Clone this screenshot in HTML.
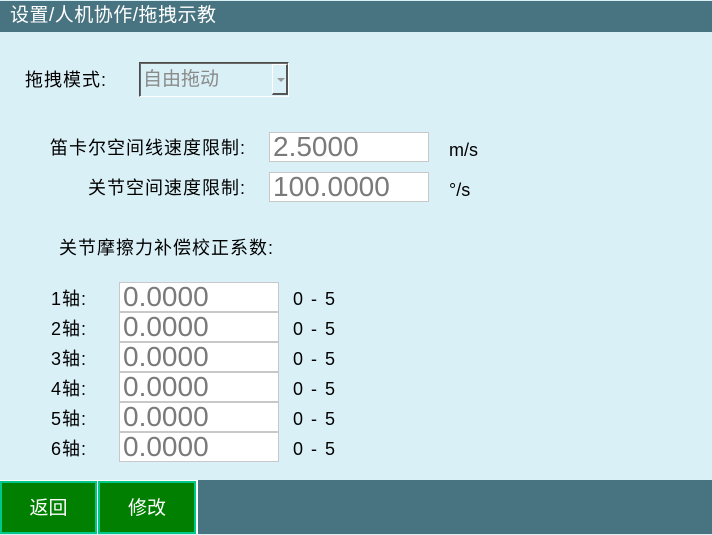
<!DOCTYPE html>
<html><head><meta charset="utf-8"><style>
*{margin:0;padding:0;box-sizing:border-box}
body{width:712px;height:534px;background:#daf0f7;position:relative;overflow:hidden;font-family:"Liberation Sans","Noto Sans CJK SC",sans-serif;color:#000}
.a{position:absolute;white-space:nowrap}
.t{left:0;top:1px;width:712px;height:31px;background:#487380;color:#fff;font-size:19px;line-height:30px;padding-left:10px;letter-spacing:0.5px}
.l{font-size:18px;line-height:20px;letter-spacing:1px}
.in{position:absolute;background:#fff;border:1px solid #c8c8c8;color:#7a7a7a;font-size:28px;line-height:28px;padding-left:3px;overflow:hidden}
.r{font-size:18px;line-height:20px;word-spacing:3px}
.btn{position:absolute;top:481px;height:53px;background:#007f00;border:2px solid #00c88a;color:#fff;font-size:19px;text-align:center;line-height:52px}
</style></head><body>
<div class="a t">设置/人机协作/拖拽示教</div>
<div class="a l" style="left:25px;top:70px">拖拽模式:</div>
<div class="a" style="left:139px;top:62px;width:150px;height:35px;border:1px solid #4a4a4a;border-right-color:#fff;border-bottom-color:#fff;background:#daf0f7"></div>
<div class="a" style="left:140px;top:63px;width:148px;height:33px;border-top:1px solid #6a6a6a;border-left:1px solid #6a6a6a"></div>
<div class="a" style="left:143px;top:67px;font-size:19px;color:#8a8a8a;line-height:26px">自由拖动</div>
<div class="a" style="left:272px;top:64px;width:16px;height:31px;border:1px solid #fff;border-right:2px solid #555;border-bottom:2px solid #555;background:#daf0f7"></div>
<div class="a" style="left:277px;top:78px;width:0;height:0;border-left:4px solid transparent;border-right:4px solid transparent;border-top:4px solid #999"></div>
<div class="a l" style="left:50px;top:138px">笛卡尔空间线速度限制:</div>
<div class="in" style="left:269px;top:132px;width:160px;height:30px">2.5000</div>
<div class="a l" style="left:449px;top:140px;letter-spacing:0">m/s</div>
<div class="a l" style="left:88px;top:178px">关节空间速度限制:</div>
<div class="in" style="left:269px;top:172px;width:160px;height:30px">100.0000</div>
<div class="a l" style="left:449px;top:180px;letter-spacing:0">°/s</div>
<div class="a l" style="left:59px;top:238px">关节摩擦力补偿校正系数:</div>
<div class="a l" style="left:51px;top:289px">1轴:</div><div class="in" style="left:119px;top:282px;width:160px;height:30px">0.0000</div><div class="a r" style="left:293px;top:289px">0 - 5</div>
<div class="a l" style="left:51px;top:319px">2轴:</div><div class="in" style="left:119px;top:312px;width:160px;height:30px">0.0000</div><div class="a r" style="left:293px;top:319px">0 - 5</div>
<div class="a l" style="left:51px;top:349px">3轴:</div><div class="in" style="left:119px;top:342px;width:160px;height:30px">0.0000</div><div class="a r" style="left:293px;top:349px">0 - 5</div>
<div class="a l" style="left:51px;top:379px">4轴:</div><div class="in" style="left:119px;top:372px;width:160px;height:30px">0.0000</div><div class="a r" style="left:293px;top:379px">0 - 5</div>
<div class="a l" style="left:51px;top:409px">5轴:</div><div class="in" style="left:119px;top:402px;width:160px;height:30px">0.0000</div><div class="a r" style="left:293px;top:409px">0 - 5</div>
<div class="a l" style="left:51px;top:439px">6轴:</div><div class="in" style="left:119px;top:432px;width:160px;height:30px">0.0000</div><div class="a r" style="left:293px;top:439px">0 - 5</div>
<div class="a" style="left:0;top:480px;width:712px;height:54px;background:#487380"></div>
<div class="a" style="left:0;top:480px;width:198px;height:54px;background:#fff"></div>
<div class="btn" style="left:0;width:97px">返回</div>
<div class="btn" style="left:98px;width:98px">修改</div>
</body></html>
